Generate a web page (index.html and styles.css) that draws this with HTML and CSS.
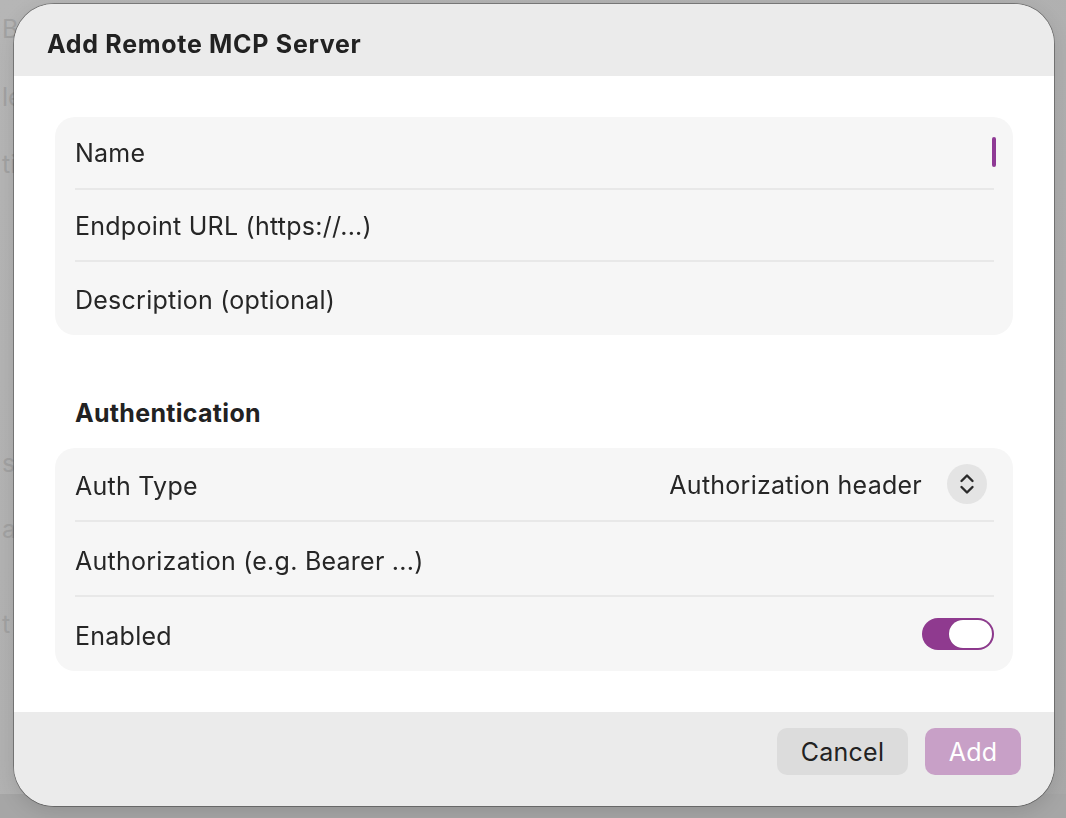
FILE: index.html
```html
<!DOCTYPE html>
<html lang="en">
<head>
<meta charset="utf-8">
<title>Add Remote MCP Server</title>
<link rel="stylesheet" href="styles.css">
</head>
<body>
  <div class="backdrop">
    <div class="backdrop-list">
      <span class="bg-line l1">Ba</span>
      <span class="bg-line l2">le</span>
      <span class="bg-line l3">ti</span>
      <span class="bg-line l4">s</span>
      <span class="bg-line l5">ar</span>
      <span class="bg-line l6">t</span>
    </div>
    <div class="backdrop-bottom"></div>
  </div>

  <div class="dialog" role="dialog" aria-labelledby="dlg-title">
    <header class="dialog-header">
      <h1 id="dlg-title" class="dialog-title">Add Remote MCP Server</h1>
    </header>

    <main class="dialog-body">
      <section class="card">
        <div class="row">
          <span class="placeholder">Name</span>
          <span class="caret"></span>
        </div>
        <div class="row">
          <span class="placeholder">Endpoint URL (https://...)</span>
        </div>
        <div class="row">
          <span class="placeholder">Description (optional)</span>
        </div>
      </section>

      <h2 class="section-title">Authentication</h2>

      <section class="card card-auth">
        <div class="row">
          <span class="label">Auth Type</span>
          <div class="popup">
            <span class="popup-value">Authorization header</span>
            <span class="popup-stepper">
              <svg width="16" height="24" viewBox="0 0 16 24" aria-hidden="true">
                <path d="M2.5 9 L8 3.5 L13.5 9" fill="none" stroke="#2a2a2a" stroke-width="2.4" stroke-linecap="round" stroke-linejoin="round"/>
                <path d="M2.5 15 L8 20.5 L13.5 15" fill="none" stroke="#2a2a2a" stroke-width="2.4" stroke-linecap="round" stroke-linejoin="round"/>
              </svg>
            </span>
          </div>
        </div>
        <div class="row">
          <span class="placeholder">Authorization (e.g. Bearer ...)</span>
        </div>
        <div class="row">
          <span class="label">Enabled</span>
          <span class="toggle is-on"><span class="knob"></span></span>
        </div>
      </section>
    </main>

    <footer class="dialog-footer">
      <button class="btn btn-cancel" type="button">Cancel</button>
      <button class="btn btn-add" type="button" disabled>Add</button>
    </footer>
  </div>
</body>
</html>
```

FILE: styles.css
```css
* {
  box-sizing: border-box;
}

html, body {
  margin: 0;
  padding: 0;
  height: 100%;
}

body {
  font-family: Inter, "Noto Sans", "Liberation Sans", sans-serif;
  color: #262626;
  overflow: hidden;
  background: #b2b2b2;
}

/* dimmed window behind the sheet */
.backdrop {
  position: fixed;
  inset: 0;
  background: linear-gradient(135deg, #b6b6b6 0%, #b0b0b0 60%, #a9a9a9 100%);
}

.backdrop-list {
  position: absolute;
  left: 2px;
  top: 0;
  width: 60px;
  height: 100%;
  color: #a2a2a2;
  font-size: 25px;
}

.bg-line {
  position: absolute;
  left: 0;
}
.l1 { top: 14px; }
.l2 { top: 82px; }
.l3 { top: 149px; }
.l4 { top: 448px; }
.l5 { top: 514px; }
.l6 { top: 609px; }

.backdrop-bottom {
  position: absolute;
  left: 0;
  right: 0;
  bottom: 0;
  height: 24px;
  background: #a6a6a6;
}

/* the sheet */
.dialog {
  position: absolute;
  left: 14px;
  top: 4px;
  width: 1040px;
  height: 802px;
  border-radius: 40px;
  overflow: hidden;
  background: #ffffff;
  box-shadow: 0 0 0 1px rgba(0, 0, 0, 0.32), 0 6px 20px rgba(0, 0, 0, 0.12);
  display: flex;
  flex-direction: column;
}

.dialog-header {
  height: 72px;
  background: #ebebeb;
  display: flex;
  align-items: center;
  padding: 0 33px;
  flex-shrink: 0;
}

.dialog-title {
  margin: 0;
  font-size: 25px;
  font-weight: 700;
  letter-spacing: 0.7px;
  color: #222222;
  position: relative;
  top: 4px;
}

.dialog-body {
  flex: 1;
  background: #ffffff;
  padding: 41px 41px 41px;
  display: flex;
  flex-direction: column;
}

.card {
  background: #f6f6f6;
  border-radius: 20px;
  padding: 0 19px 0 20px;
}

.row {
  height: 72.7px;
  display: flex;
  align-items: center;
  justify-content: space-between;
  border-bottom: 2px solid #e8e8e8;
  font-size: 25px;
  letter-spacing: 0.25px;
}

.row > span:first-child {
  position: relative;
  top: 1px;
}

.card-auth .row > span:first-child {
  top: 2px;
}

.row:last-child {
  border-bottom: none;
}

.card-auth .row {
  height: 74.3px;
}

.placeholder,
.label {
  color: #262626;
}

.caret {
  width: 4px;
  height: 30px;
  border-radius: 2px;
  background: #8f3a95;
  margin-right: -2px;
}

.section-title {
  margin: 64px 0 21px;
  padding-left: 20px;
  font-size: 25px;
  font-weight: 700;
  letter-spacing: 0.3px;
  line-height: 28px;
  color: #222222;
}

.popup {
  display: flex;
  align-items: center;
  gap: 25px;
  margin-right: 7px;
}

.popup-value {
  color: #262626;
  position: relative;
  top: 1px;
}

.popup-stepper {
  width: 40px;
  height: 40px;
  border-radius: 50%;
  background: #e4e4e4;
  display: flex;
  align-items: center;
  justify-content: center;
}

.toggle {
  width: 72px;
  height: 32px;
  border-radius: 16px;
  background: #8f3a8f;
  position: relative;
}

.toggle .knob {
  position: absolute;
  right: 2px;
  top: 2px;
  width: 43px;
  height: 28px;
  border-radius: 14px;
  background: #ffffff;
  box-shadow: 0 0 1px rgba(0, 0, 0, 0.25);
}

.dialog-footer {
  height: 94px;
  background: #ebebeb;
  display: flex;
  justify-content: flex-end;
  align-items: flex-start;
  gap: 17px;
  padding: 16px 33px 0;
  flex-shrink: 0;
}

.btn {
  font-family: inherit;
  font-size: 25px;
  letter-spacing: 0.25px;
  height: 47px;
  border: none;
  border-radius: 10px;
  padding: 0;
  cursor: default;
}

.btn-cancel {
  width: 131px;
  background: #dcdcdc;
  color: #222222;
}

.btn-add {
  width: 96px;
  background: #c8a0c7;
  color: #ffffff;
}
```
